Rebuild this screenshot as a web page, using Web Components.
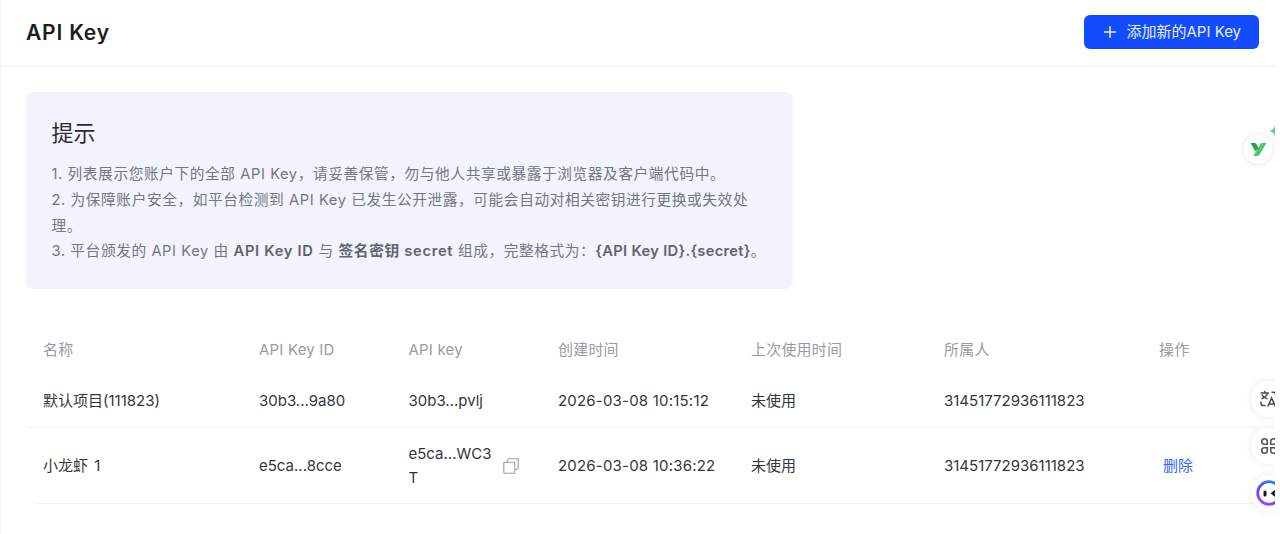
<!DOCTYPE html>
<html lang="zh-CN">
<head>
<meta charset="UTF-8">
<title>API Key</title>
<style>
  body {
    margin: 0;
    background: #fff;
    font-family: Inter, "Noto Sans CJK SC", sans-serif;
  }
</style>
</head>
<body>
<api-key-page></api-key-page>

<script>
class AddButton extends HTMLElement {
  constructor () {
    super()
    this.attachShadow({ mode: 'open' })
  }

  connectedCallback () {
    this.shadowRoot.innerHTML =
      /* html */`
      <style>
        :host { display: block; }
        button {
          display: flex;
          align-items: center;
          gap: 10px;
          width: 175px;
          height: 34px;
          padding: 0 0 0 18.5px;
          border: 0;
          border-radius: 6px;
          background: #134cff;
          color: #e9eeff;
          font: inherit;
          font-size: 15px;
          line-height: 34px;
          white-space: nowrap;
        }
        svg { flex: none; }
      </style>
      <button>
        <svg width="14" height="14" viewBox="0 0 14 14" fill="none" stroke="currentColor" stroke-width="1.5"><path d="M7 1v12M1 7h12"/></svg>
        <span><slot></slot></span>
      </button>
      `
  }
}
customElements.define('add-button', AddButton)

class PageHeader extends HTMLElement {
  constructor () {
    super()
    this.attachShadow({ mode: 'open' })
  }

  connectedCallback () {
    this.shadowRoot.innerHTML =
      /* html */`
      <style>
        :host {
          display: flex;
          align-items: center;
          justify-content: space-between;
          box-sizing: border-box;
          height: 67px;
          padding: 0 16px 1px 25px;
          border-bottom: 2px solid #f6f6f7;
        }
        h1 {
          margin: 0;
          color: #1c1d20;
          font-size: 21px;
          font-weight: 600;
          letter-spacing: 0.8px;
        }
      </style>
      <h1><slot></slot></h1>
      <slot name="action"></slot>
      `
  }
}
customElements.define('page-header', PageHeader)

class TipCard extends HTMLElement {
  constructor () {
    super()
    this.attachShadow({ mode: 'open' })
  }

  connectedCallback () {
    this.shadowRoot.innerHTML =
      /* html */`
      <style>
        :host {
          display: block;
          box-sizing: border-box;
          width: 767px;
          height: 197px;
          padding: 25px 25px 0 25.5px;
          border-radius: 7px;
          background: #f2f3fc;
        }
        h2 {
          margin: 0 0 13px;
          color: #2b2c31;
          font-size: 22px;
          font-weight: 400;
          line-height: 32px;
        }
        p {
          margin: 0;
          color: #75767f;
          font-size: 14.7px;
          line-height: 25.8px;
          letter-spacing: 0.58px;
          white-space: nowrap;
        }
        b { color: #62636c; font-weight: 600; letter-spacing: 0.7px; }
        .format { letter-spacing: 0.3px; }
      </style>
      <h2>提示</h2>
      <p>1. 列表展示您账户下的全部 API Key，请妥善保管，勿与他人共享或暴露于浏览器及客户端代码中。</p>
      <p>2. 为保障账户安全，如平台检测到 API Key 已发生公开泄露，可能会自动对相关密钥进行更换或失效处<br>理。</p>
      <p>3. 平台颁发的 API Key 由 <b>API Key ID</b> 与 <b>签名密钥 secret</b> 组成，完整格式为：<b class="format">{API Key ID}.{secret}</b>。</p>
      `
  }
}
customElements.define('tip-card', TipCard)

class KeyRow extends HTMLElement {
  constructor () {
    super()
    this.attachShadow({ mode: 'open' })
  }

  connectedCallback () {
    const cells = ['name', 'id', 'key', 'created', 'used', 'owner', 'action']
    this.shadowRoot.innerHTML =
      /* html */`
      <style>
        :host {
          display: grid;
          grid-template-columns: 216px 149.5px 149.5px 193px 193px 215px 1fr;
          align-items: center;
          box-sizing: border-box;
          height: var(--row-height, 52px);
          padding-left: 17px;
          color: #35363a;
          font-size: 15px;
          line-height: 24px;
          white-space: nowrap;
        }
        :host([head]) { padding-top: 2px; color: #9a9ba1; letter-spacing: 0.2px; }
      </style>
      ${cells.map(c => `<div><slot name="${c}"></slot></div>`).join('')}
      `
  }
}
customElements.define('key-row', KeyRow)

class CopyKey extends HTMLElement {
  constructor () {
    super()
    this.attachShadow({ mode: 'open' })
  }

  connectedCallback () {
    this.shadowRoot.innerHTML =
      /* html */`
      <style>
        :host { display: flex; align-items: center; gap: 10px; }
        span { width: 84px; word-break: break-all; white-space: normal; }
        svg { flex: none; }
      </style>
      <span><slot></slot></span>
      <svg width="16" height="16" viewBox="0 0 16 16" fill="none" stroke="#9b9ca1" stroke-width="1.1" stroke-linejoin="round"><rect x=".8" y="4.2" width="11" height="11" rx=".8"/><path d="M4.2 4.2 5.2.8h10v10l-3.4 1"/></svg>
      `
  }
}
customElements.define('copy-key', CopyKey)

class FloatButton extends HTMLElement {
  constructor () {
    super()
    this.attachShadow({ mode: 'open' })
  }

  connectedCallback () {
    this.shadowRoot.innerHTML =
      /* html */`
      <style>
        :host {
          display: flex;
          align-items: center;
          justify-content: center;
          box-sizing: border-box;
          width: 36px;
          height: 36px;
          border-radius: 50%;
          background: #fff;
          box-shadow: 0 0 10px rgba(0, 0, 0, .08);
        }
      </style>
      <slot></slot>
      `
  }
}
customElements.define('float-button', FloatButton)

class ApiKeyPage extends HTMLElement {
  constructor () {
    super()
    this.attachShadow({ mode: 'open' })
  }

  connectedCallback () {
    this.shadowRoot.innerHTML =
      /* html */`
      <style>
        :host {
          display: block;
          position: relative;
          box-sizing: border-box;
          width: 1275px;
          height: 534px;
          overflow: hidden;
          border-left: 1px solid #f3f3f4;
        }
        main { padding: 25px 16px 0 25px; }
        .keys { margin-top: 34px; }
        .line { height: 1px; background: #f3f3f4; }
        .last { margin-left: 9px; }
        .tall { --row-height: 75px; }
        .date { letter-spacing: 0.2px; }
        .spaced { word-spacing: 2px; }
        a { margin-left: 4px; color: #3e63ff; }
        /* assistant widgets pinned to the right edge, partly off screen */
        .helper {
          position: absolute;
          top: 133px;
          right: 1px;
          width: 32px;
          height: 32px;
          border: 1px solid #f1f1f2;
          box-shadow: 0 1px 4px rgba(0, 0, 0, .05);
        }
        .spark { position: absolute; top: 125px; right: -6px; }
        .dock {
          position: absolute;
          top: 381px;
          right: -12px;
          display: grid;
          gap: 11px;
        }
      </style>
      <page-header>API Key<add-button slot="action">添加新的API Key</add-button></page-header>
      <main>
        <tip-card></tip-card>
        <div class="keys">
          <key-row head>
            <span slot="name">名称</span>
            <span slot="id">API Key ID</span>
            <span slot="key">API key</span>
            <span slot="created">创建时间</span>
            <span slot="used">上次使用时间</span>
            <span slot="owner">所属人</span>
            <span slot="action">操作</span>
          </key-row>
          <key-row>
            <span slot="name">默认项目(111823)</span>
            <span slot="id">30b3...9a80</span>
            <span slot="key">30b3...pvlj</span>
            <span slot="created" class="date">2026-03-08 10:15:12</span>
            <span slot="used">未使用</span>
            <span slot="owner">31451772936111823</span>
          </key-row>
          <div class="line"></div>
          <key-row class="tall">
            <span slot="name" class="spaced">小龙虾 1</span>
            <span slot="id">e5ca...8cce</span>
            <copy-key slot="key">e5ca...WC3T</copy-key>
            <span slot="created" class="date">2026-03-08 10:36:22</span>
            <span slot="used">未使用</span>
            <span slot="owner">31451772936111823</span>
            <a slot="action">删除</a>
          </key-row>
          <div class="line last"></div>
        </div>
      </main>
      <float-button class="helper">
        <svg width="17" height="15" viewBox="0 0 17 15"><path d="M0.5 1h4.2q1.2 0 1.7 1l2 4-3 3.4z" fill="#319c55"/><path d="M11.2 1h5.3L9.6 12.6Q8.7 14 7 14H3.2z" fill="#50c36c"/></svg>
      </float-button>
      <svg class="spark" width="12" height="12" viewBox="0 0 12 12"><path d="M6 0q.8 5.200 6 6-5.200.8-6 6-.8-5.200-6-6 5.200-.8 6-6z" fill="#55d477"/></svg>
      <div class="dock">
        <float-button>
          <svg width="20" height="18" viewBox="0 0 20 18" fill="none" stroke="#4b4c50" stroke-width="1.5"><path d="M1.500 3h8.500M5.700.8V3M2.500 8.800Q7.500 7 8.500 3M2.800 4.500q2 3.500 5.700 4.300M2 11.500v2q0 2 2 2h2.500M12.500 2.200h2q2 0 2 2v1.600M8.800 16.500 12.600 8l3.800 8.500M10 14h5.200"/></svg>
        </float-button>
        <float-button>
          <svg width="18" height="18" viewBox="0 0 18 18" fill="none" stroke="#55565a" stroke-width="1.600"><path d="M7.300 7.300H4.500a2.800 2.800 0 1 1 2.800-2.800zM10.700 7.300V4.500a2.800 2.800 0 1 1 2.800 2.800zM7.300 10.700v2.800a2.800 2.800 0 1 1-2.800-2.800zM10.700 10.700h2.800a2.800 2.800 0 1 1-2.800 2.800z"/></svg>
        </float-button>
        <float-button>
          <svg width="26" height="26" viewBox="0 0 26 26">
            <defs><linearGradient id="ring" x1="0" y1="1" x2=".7" y2="0"><stop offset="0" stop-color="#c04df0"/><stop offset=".4" stop-color="#6b45ee"/><stop offset="1" stop-color="#3579f5"/></linearGradient></defs>
            <circle cx="13" cy="13" r="11.300" fill="#fff" stroke="url(#ring)" stroke-width="2.800"/>
            <rect x="7.500" y="10.500" width="3" height="6" rx="1.500" fill="#17171c"/>
            <path d="M19.500 10.800 16.500 13.300l3 2.500" fill="none" stroke="#17171c" stroke-width="2.400"/>
          </svg>
        </float-button>
      </div>
      `
  }
}
customElements.define('api-key-page', ApiKeyPage)
</script>
</body>
</html>
